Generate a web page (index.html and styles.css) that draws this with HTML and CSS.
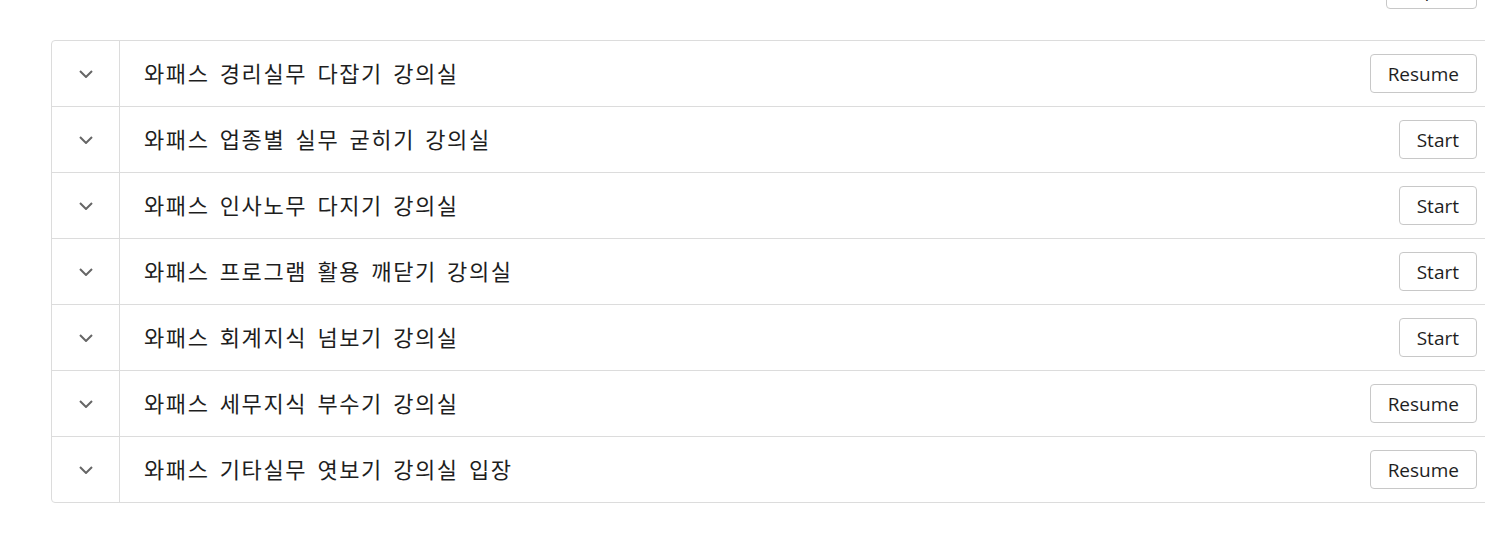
FILE: index.html
```html
<!DOCTYPE html>
<html lang="ko">
<head>
    <meta charset="UTF-8">
    <meta name="viewport" content="width=device-width, initial-scale=1.0">
    <title>강의실 목록</title>
    <link rel="stylesheet" href="styles.css">
</head>
<body>
    <div class="page">
        <div class="toolbar">
            <button class="btn btn-top">Expand</button>
        </div>

        <div class="course-list">
            <div class="course-row">
                <div class="toggle"><svg viewBox="0 0 14 8" width="14" height="8"><path d="M1 1l6 6 6-6" /></svg></div>
                <div class="course-title">와패스 경리실무 다잡기 강의실</div>
                <button class="btn">Resume</button>
            </div>
            <div class="course-row">
                <div class="toggle"><svg viewBox="0 0 14 8" width="14" height="8"><path d="M1 1l6 6 6-6" /></svg></div>
                <div class="course-title">와패스 업종별 실무 굳히기 강의실</div>
                <button class="btn">Start</button>
            </div>
            <div class="course-row">
                <div class="toggle"><svg viewBox="0 0 14 8" width="14" height="8"><path d="M1 1l6 6 6-6" /></svg></div>
                <div class="course-title">와패스 인사노무 다지기 강의실</div>
                <button class="btn">Start</button>
            </div>
            <div class="course-row">
                <div class="toggle"><svg viewBox="0 0 14 8" width="14" height="8"><path d="M1 1l6 6 6-6" /></svg></div>
                <div class="course-title">와패스 프로그램 활용 깨닫기 강의실</div>
                <button class="btn">Start</button>
            </div>
            <div class="course-row">
                <div class="toggle"><svg viewBox="0 0 14 8" width="14" height="8"><path d="M1 1l6 6 6-6" /></svg></div>
                <div class="course-title">와패스 회계지식 넘보기 강의실</div>
                <button class="btn">Start</button>
            </div>
            <div class="course-row">
                <div class="toggle"><svg viewBox="0 0 14 8" width="14" height="8"><path d="M1 1l6 6 6-6" /></svg></div>
                <div class="course-title">와패스 세무지식 부수기 강의실</div>
                <button class="btn">Resume</button>
            </div>
            <div class="course-row">
                <div class="toggle"><svg viewBox="0 0 14 8" width="14" height="8"><path d="M1 1l6 6 6-6" /></svg></div>
                <div class="course-title">와패스 기타실무 엿보기 강의실 입장</div>
                <button class="btn">Resume</button>
            </div>
        </div>
    </div>
</body>
</html>
```

FILE: styles.css
```css
:root {
    --text: #1e1e1e;
    --muted: #666;
    --line: #dcdcdc;
    --btn-line: #c8c8c8;
}

html, body {
    margin: 0;
    overflow-x: hidden;
}

body {
    background: #fff;
    color: var(--text);
    font-family: 'Noto Sans', 'Noto Sans CJK KR', sans-serif;
}

.page {
    padding-left: 51px;
}

.toolbar {
    display: flex;
    justify-content: flex-end;
    height: 40px;
    width: 1440px;
    padding-right: 14px;
    box-sizing: border-box;
}

.btn-top {
    margin-top: -30px;
    width: 91px;
}

.course-list {
    width: 1440px;
    border: 1px solid var(--line);
    border-radius: 4px;
}

.course-row {
    display: flex;
    align-items: center;
    height: 65px;
    border-top: 1px solid var(--line);
    padding-right: 15px;
}

.course-row:first-child {
    border-top: none;
}

.toggle {
    width: 67px;
    align-self: stretch;
    display: flex;
    align-items: center;
    justify-content: center;
    border-right: 1px solid var(--line);
}

.toggle svg path {
    fill: none;
    stroke: var(--muted);
    stroke-width: 2;
}

.course-title {
    flex: 1;
    padding: 0 0 3px 24px;
    font-family: 'Noto Sans CJK KR', sans-serif;
    font-size: 22px;
    letter-spacing: 1.6px;
    word-spacing: 2.5px;
    color: var(--text);
}

.btn {
    height: 39px;
    padding: 0 17px;
    background: #fff;
    border: 1px solid var(--btn-line);
    border-radius: 4px;
    font-family: 'Open Sans', 'Noto Sans', sans-serif;
    font-size: 19px;
    color: var(--text);
}
```
